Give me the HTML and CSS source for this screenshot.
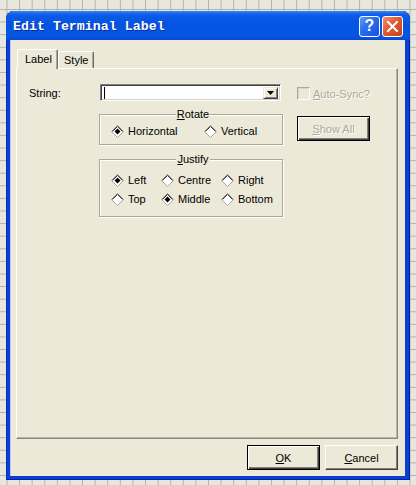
FILE: index.html
```html
<!DOCTYPE html>
<html>
<head>
<meta charset="utf-8">
<link rel="stylesheet" href="styles.css">
</head>
<body>
<div class="window">
  <div class="titlebar">
    <span class="title">Edit Terminal Label</span>
    <div class="tbtns">
      <span class="tbtn help">?</span>
      <span class="tbtn close"><svg width="13" height="13" viewBox="0 0 13 13"><path d="M2 2 L11 11 M11 2 L2 11" stroke="#fff" stroke-width="2" stroke-linecap="square"/></svg></span>
    </div>
  </div>
  <div class="client">
    <div class="tabs">
      <div class="tab active">Label</div>
      <div class="tab">Style</div>
    </div>
    <div class="panel">
      <div class="form">
        <div class="lbl">String:</div>
        <div class="mid">
          <div class="combo">
            <div class="combo-input"><span class="caret"></span></div>
            <div class="combo-btn"><svg width="7" height="4" viewBox="0 0 7 4"><path d="M0 0 H7 L3.5 4 Z" fill="#000"/></svg></div>
          </div>
          <div class="group rotate">
            <div class="legend"><u>R</u>otate</div>
            <div class="radios rot">
              <div class="radio"><svg class="dia" width="13" height="13" viewBox="0 0 13 13"><polygon points="6.5,0.5 12.5,6.5 6.5,12.5 0.5,6.5" fill="#fff"/><path d="M0.5 6.5 L6.5 0.5 L12.5 6.5" stroke="#808080" fill="none"/><path d="M1.5 6.5 L6.5 1.5 L11.5 6.5" stroke="#404040" fill="none"/><path d="M0.5 6.5 L6.5 12.5 L12.5 6.5" stroke="#a9a699" fill="none"/><polygon points="6.5,3.5 9.5,6.5 6.5,9.5 3.5,6.5" fill="#000"/></svg>Horizontal</div>
              <div class="radio"><svg class="dia" width="13" height="13" viewBox="0 0 13 13"><polygon points="6.5,0.5 12.5,6.5 6.5,12.5 0.5,6.5" fill="#fff"/><path d="M0.5 6.5 L6.5 0.5 L12.5 6.5" stroke="#808080" fill="none"/><path d="M1.5 6.5 L6.5 1.5 L11.5 6.5" stroke="#404040" fill="none"/><path d="M0.5 6.5 L6.5 12.5 L12.5 6.5" stroke="#a9a699" fill="none"/></svg>Vertical</div>
            </div>
          </div>
          <div class="group justify">
            <div class="legend"><u>J</u>ustify</div>
            <div class="radios jus">
              <div class="radio"><svg class="dia" width="13" height="13" viewBox="0 0 13 13"><polygon points="6.5,0.5 12.5,6.5 6.5,12.5 0.5,6.5" fill="#fff"/><path d="M0.5 6.5 L6.5 0.5 L12.5 6.5" stroke="#808080" fill="none"/><path d="M1.5 6.5 L6.5 1.5 L11.5 6.5" stroke="#404040" fill="none"/><path d="M0.5 6.5 L6.5 12.5 L12.5 6.5" stroke="#a9a699" fill="none"/><polygon points="6.5,3.5 9.5,6.5 6.5,9.5 3.5,6.5" fill="#000"/></svg>Left</div>
              <div class="radio"><svg class="dia" width="13" height="13" viewBox="0 0 13 13"><polygon points="6.5,0.5 12.5,6.5 6.5,12.5 0.5,6.5" fill="#fff"/><path d="M0.5 6.5 L6.5 0.5 L12.5 6.5" stroke="#808080" fill="none"/><path d="M1.5 6.5 L6.5 1.5 L11.5 6.5" stroke="#404040" fill="none"/><path d="M0.5 6.5 L6.5 12.5 L12.5 6.5" stroke="#a9a699" fill="none"/></svg>Centre</div>
              <div class="radio"><svg class="dia" width="13" height="13" viewBox="0 0 13 13"><polygon points="6.5,0.5 12.5,6.5 6.5,12.5 0.5,6.5" fill="#fff"/><path d="M0.5 6.5 L6.5 0.5 L12.5 6.5" stroke="#808080" fill="none"/><path d="M1.5 6.5 L6.5 1.5 L11.5 6.5" stroke="#404040" fill="none"/><path d="M0.5 6.5 L6.5 12.5 L12.5 6.5" stroke="#a9a699" fill="none"/></svg>Right</div>
              <div class="radio"><svg class="dia" width="13" height="13" viewBox="0 0 13 13"><polygon points="6.5,0.5 12.5,6.5 6.5,12.5 0.5,6.5" fill="#fff"/><path d="M0.5 6.5 L6.5 0.5 L12.5 6.5" stroke="#808080" fill="none"/><path d="M1.5 6.5 L6.5 1.5 L11.5 6.5" stroke="#404040" fill="none"/><path d="M0.5 6.5 L6.5 12.5 L12.5 6.5" stroke="#a9a699" fill="none"/></svg>Top</div>
              <div class="radio"><svg class="dia" width="13" height="13" viewBox="0 0 13 13"><polygon points="6.5,0.5 12.5,6.5 6.5,12.5 0.5,6.5" fill="#fff"/><path d="M0.5 6.5 L6.5 0.5 L12.5 6.5" stroke="#808080" fill="none"/><path d="M1.5 6.5 L6.5 1.5 L11.5 6.5" stroke="#404040" fill="none"/><path d="M0.5 6.5 L6.5 12.5 L12.5 6.5" stroke="#a9a699" fill="none"/><polygon points="6.5,3.5 9.5,6.5 6.5,9.5 3.5,6.5" fill="#000"/></svg>Middle</div>
              <div class="radio"><svg class="dia" width="13" height="13" viewBox="0 0 13 13"><polygon points="6.5,0.5 12.5,6.5 6.5,12.5 0.5,6.5" fill="#fff"/><path d="M0.5 6.5 L6.5 0.5 L12.5 6.5" stroke="#808080" fill="none"/><path d="M1.5 6.5 L6.5 1.5 L11.5 6.5" stroke="#404040" fill="none"/><path d="M0.5 6.5 L6.5 12.5 L12.5 6.5" stroke="#a9a699" fill="none"/></svg>Bottom</div>
            </div>
          </div>
        </div>
        <div class="right">
          <div class="check"><span class="box"></span><span class="dis"><u>A</u>uto-Sync?</span></div>
          <div class="btn default"><span class="dis"><u>S</u>how All</span></div>
        </div>
      </div>
    </div>
    <div class="buttons">
      <div class="btn default"><span><u>O</u>K</span></div>
      <div class="btn"><span><u>C</u>ancel</span></div>
    </div>
  </div>
</div>
</body>
</html>
```
FILE: styles.css
```css
html, body { margin: 0; padding: 0; }
body {
  width: 416px;
  height: 485px;
  position: relative;
  overflow: hidden;
  background-color: #e8e7df;
  background-image:
    linear-gradient(to right, #b4b3ab 1px, transparent 1px),
    linear-gradient(to bottom, #b4b3ab 1px, transparent 1px);
  background-size: 12.6px 12.6px;
  background-position: 6.5px 9px;
  font-family: "Liberation Sans", Arial, sans-serif;
  font-size: 11px;
  color: #000;
}
u { text-decoration: underline; text-underline-offset: 1px; }

.window {
  position: absolute;
  left: 6px;
  top: 11px;
  width: 404px;
  height: 469px;
  box-sizing: border-box;
  display: flex;
  flex-direction: column;
  background: #0a3fd6;
  border-radius: 8px 8px 0 0;
  padding: 0 5px 4px 4px;
  box-shadow: inset 1px 0 #0830b8, inset -1px 0 #0020a0, inset 0 -1px #0020a0;
}
.titlebar {
  height: 29px;
  margin: 0 -5px 0 -4px;
  padding: 0 7px 0 7px;
  display: flex;
  align-items: center;
  justify-content: space-between;
  border-radius: 8px 8px 0 0;
  background: linear-gradient(to bottom, #3c8ef8 0, #1a6af0 2px, #0a5ae6 5px, #0454e2 14px, #0656e4 22px, #0a4fd8 28px, #0a3fd6 29px);
}
.title {
  font-family: "Liberation Mono", "Courier New", monospace;
  font-weight: bold;
  font-size: 13.3px;
  color: #fff;
  text-shadow: 1px 1px 0 #0a2a9a;
  margin-top: 1px;
}
.tbtns { display: flex; gap: 2px; margin-top: 1px; }
.tbtn {
  width: 21px;
  height: 21px;
  box-sizing: border-box;
  border: 1px solid #fff;
  border-radius: 3px;
  display: flex;
  align-items: center;
  justify-content: center;
  color: #fff;
}
.help {
  background: linear-gradient(135deg, #5c9bff 0%, #2a6cf0 45%, #1550dc 100%);
  font-family: "Liberation Sans", Arial, sans-serif;
  font-weight: bold;
  font-size: 16px;
}
.close {
  background: linear-gradient(135deg, #f0906c 0%, #e05a30 45%, #c8401c 100%);
}

.client {
  flex: 1;
  background: #ece9d8;
  display: flex;
  flex-direction: column;
  padding: 9px 7px 6px 6px;
  box-shadow: inset 1px 0 #b8c8f0;
}
.tabs {
  display: flex;
  align-items: flex-end;
  padding-left: 1px;
  height: 20px;
  margin-bottom: -1px;
  position: relative;
  z-index: 1;
}
.tab {
  box-sizing: border-box;
  height: 17px;
  padding: 0 5px 0 5px;
  display: flex;
  align-items: center;
  background: #ece9d8;
  border-top: 1px solid #fff;
  border-left: 1px solid #fff;
  border-right: 1px solid #716f64;
  border-radius: 2px 2px 0 0;
  box-shadow: inset -1px 0 #aca899;
  margin-bottom: 1px;
}
.tab.active {
  height: 20px;
  padding: 0 6px 2px 7px;
  margin-bottom: 0;
  width: 41px;
}
.panel {
  flex: 1;
  border: 1px solid;
  border-color: #fff #8a877a #8a877a #fff;
  box-shadow: inset -1px -1px #b9b6a8;
  padding: 15px 0 0 12px;
}
.form {
  display: grid;
  grid-template-columns: 70px 184px auto;
  align-items: start;
}
.lbl { line-height: 17px; padding-top: 1px; }
.mid { display: flex; flex-direction: column; }
.combo {
  margin-left: 1px;
  width: 181px;
  height: 17px;
  box-sizing: border-box;
  border: 1px solid;
  border-color: #808080 #fff #fff #808080;
  box-shadow: inset 1px 1px #404040, inset -1px -1px #d4d0c8;
  background: #fff;
  display: flex;
  padding: 2px 2px 1px 2px;
}
.combo-input { flex: 1; display: flex; align-items: center; padding-left: 1px; }
.caret { width: 1px; height: 12px; background: #000; }
.combo-btn {
  width: 15px;
  box-sizing: border-box;
  background: #ece9d8;
  border: 1px solid;
  border-color: #ece9d8 #404040 #404040 #ece9d8;
  box-shadow: inset 1px 1px #fff, inset -1px -1px #808080;
  display: flex;
  align-items: center;
  justify-content: center;
}
.group {
  border: 1px solid #aca899;
  box-shadow: inset 1px 1px #fff, 1px 1px #fff;
  display: flex;
  flex-direction: column;
}
.rotate { margin-top: 13px; height: 31px; box-sizing: border-box; }
.justify { margin-top: 14px; height: 58px; box-sizing: border-box; }
.legend {
  align-self: center;
  background: #ece9d8;
  line-height: 13px;
  padding: 0 1px;
  margin-top: -7px;
  position: relative;
  left: 2px;
}
.radios { display: grid; padding-left: 11px; row-gap: 5px; }
.rot { grid-template-columns: 93px auto; margin-top: 3px; }
.jus { grid-template-columns: 50px 60px auto; margin-top: 7px; }
.radio { display: flex; align-items: center; gap: 4px; height: 14px; }
.dia { flex: none; }

.right { display: flex; flex-direction: column; align-items: flex-start; margin-left: 14px; }
.check { display: flex; align-items: center; gap: 3px; margin-top: 3px; height: 13px; }
.box {
  width: 13px;
  height: 13px;
  box-sizing: border-box;
  border: 1px solid;
  border-color: #aca899 #fff #fff #aca899;
  box-shadow: inset 1px 1px #d8d5c6;
}
.dis { color: #aca899; text-shadow: 1px 1px 0 #fff; }
.right .btn { margin-top: 16px; }

.btn {
  width: 73px;
  height: 25px;
  box-sizing: border-box;
  background: #ece9d8;
  border: 1px solid;
  border-color: #fff #404040 #404040 #fff;
  box-shadow: inset -1px -1px #808080;
  display: flex;
  align-items: center;
  justify-content: center;
}
.btn.default {
  border-color: #000;
  box-shadow: inset 1px 1px #fff, inset -1px -1px #404040, inset -2px -2px #808080;
}
.buttons {
  display: flex;
  justify-content: flex-end;
  gap: 5px;
  margin-top: 6px;
}
```
